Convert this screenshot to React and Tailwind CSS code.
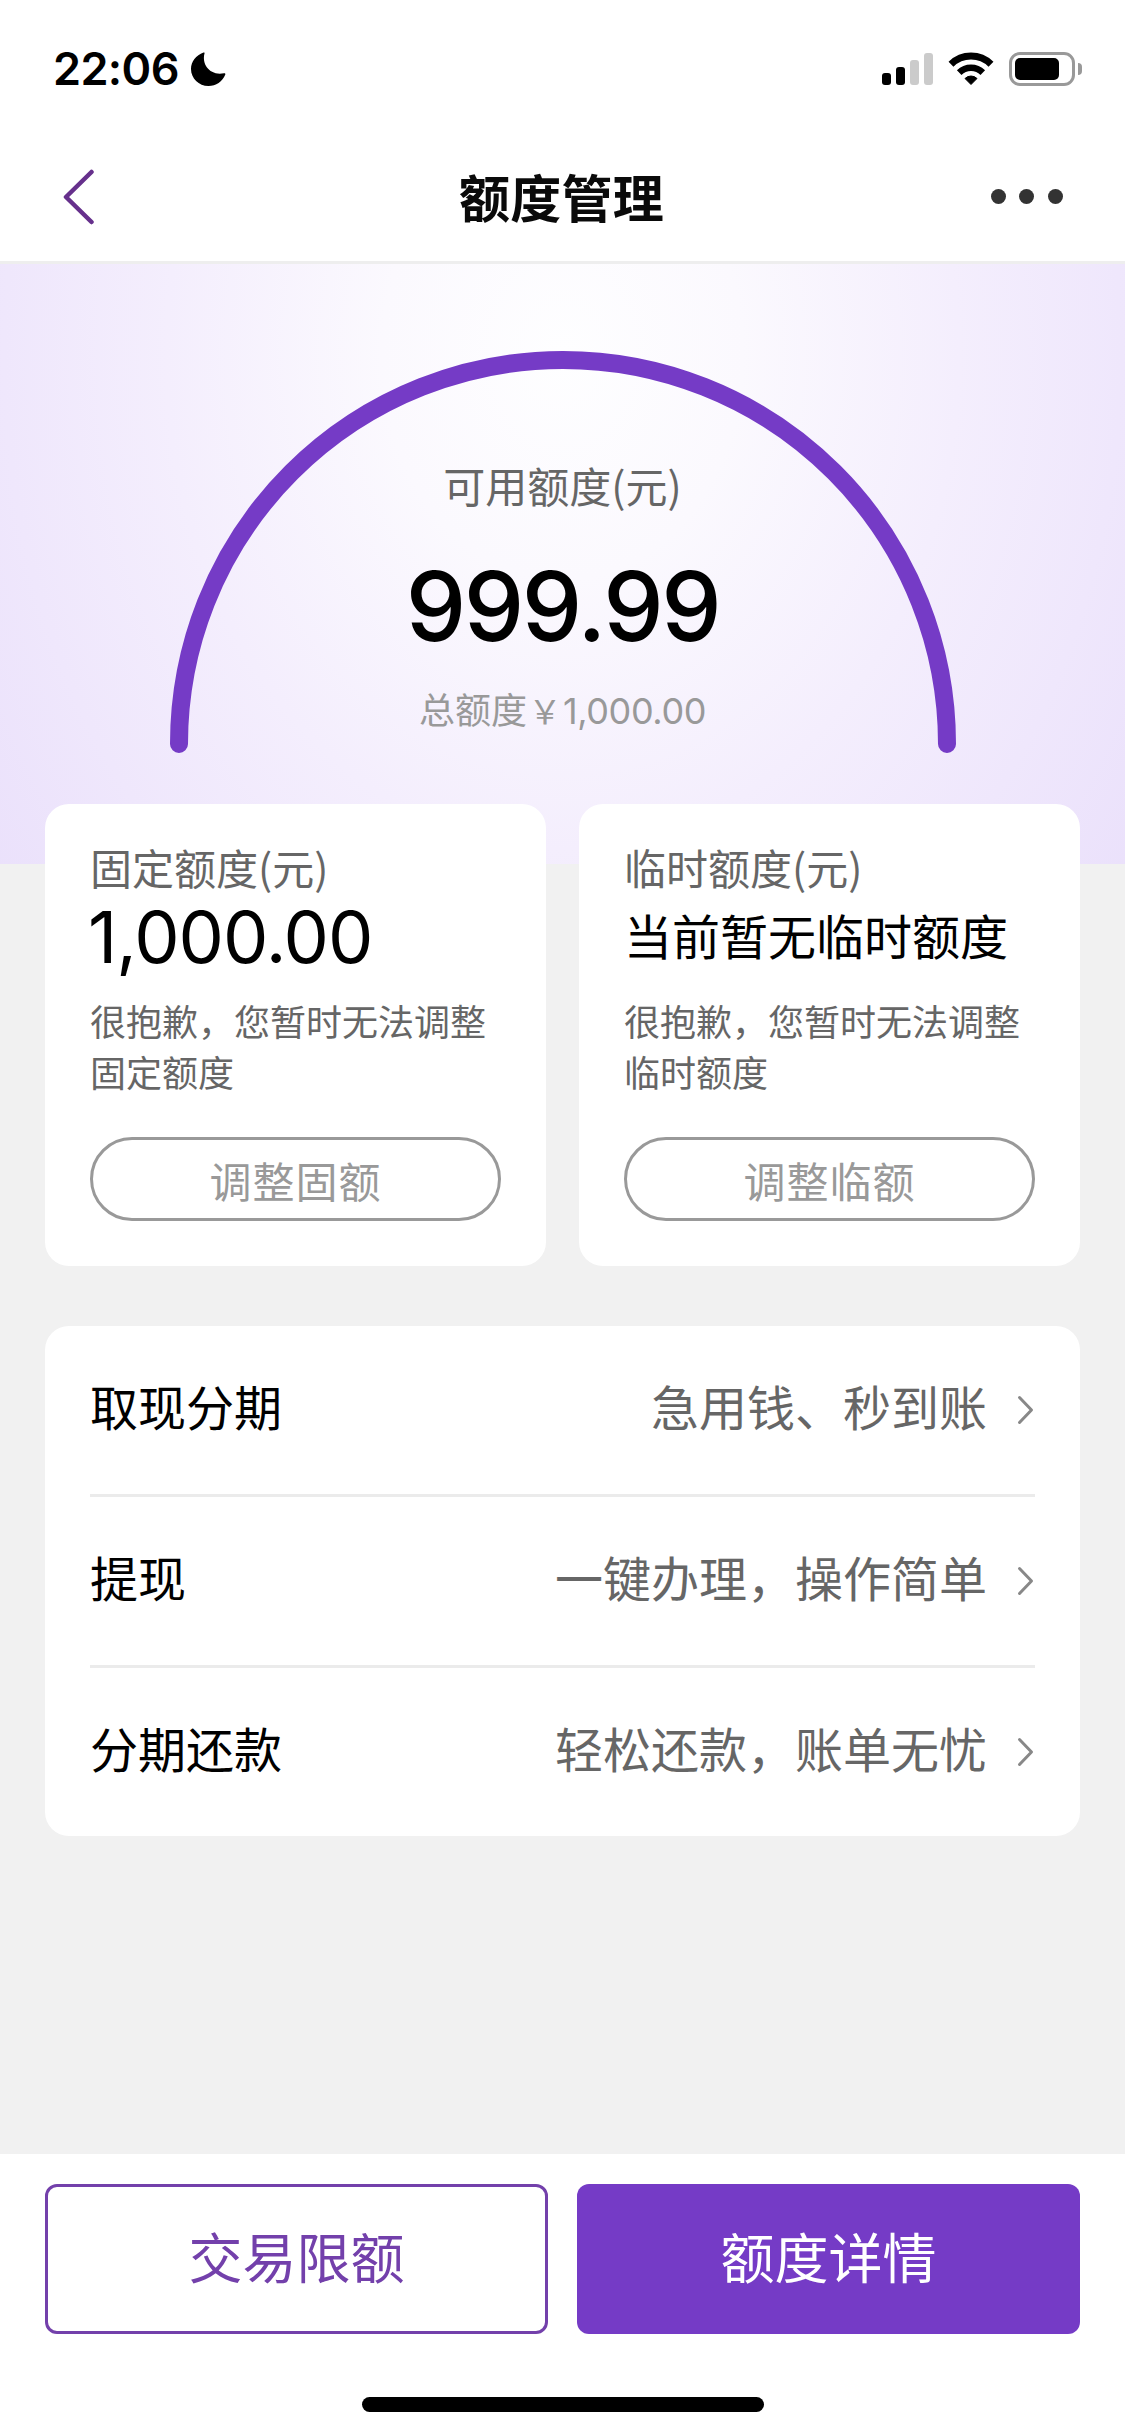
import { useState } from "react";

const quotaCards = [
  {
    id: "fixed",
    label: "固定额度(元)",
    amount: "1,000.00",
    lines: ["很抱歉，您暂时无法调整", "固定额度"],
    action: "调整固额",
  },
  {
    id: "temp",
    label: "临时额度(元)",
    notice: "当前暂无临时额度",
    lines: ["很抱歉，您暂时无法调整", "临时额度"],
    action: "调整临额",
  },
];

const services = [
  { title: "取现分期", desc: "急用钱、秒到账" },
  { title: "提现", desc: "一键办理，操作简单" },
  { title: "分期还款", desc: "轻松还款，账单无忧" },
];

function StatusBar() {
  return (
    <div className="flex h-[132px] items-start justify-between pl-[53px] pr-[43px] pt-[52px]">
      <div className="flex items-center gap-[12px]">
        <span className="font-['Inter'] text-[45px] font-semibold leading-[34px] tracking-[-0.6px]">
          22:06
        </span>
        <svg width="35" height="34" viewBox="0 0 35 34" fill="currentColor">
          <path d="M12.5 0.6C13.2 0.2 13.8 0.8 13.5 1.5C10.5 12.5 19 24 33 21.2C34 21 34.7 21.6 34.3 22.5C31.5 29.5 25 34 17.5 34C7.8 34 0 26.3 0 17C0 9.7 5 3.3 12.5 0.6Z" />
        </svg>
      </div>

      <div className="flex items-start">
        {/* Signal */}
        <div className="flex h-[33px] items-end gap-[5px]">
          <span className="h-3 w-[9px] rounded-[3px] bg-black" />
          <span className="h-[18px] w-[9px] rounded-[3px] bg-black" />
          <span className="h-[25px] w-[9px] rounded-[3px] bg-[#cbcbcb]" />
          <span className="h-8 w-[9px] rounded-[3px] bg-[#cbcbcb]" />
        </div>

        {/* Wifi */}
        <svg
          className="ml-[15px]"
          width="46"
          height="34"
          viewBox="0 0 46 34"
          fill="none"
          stroke="#000"
        >
          <path d="M3 12.2A28.5 28.5 0 0 1 43 12.2" strokeWidth="7" />
          <path d="M11.2 20.6A16.8 16.8 0 0 1 34.8 20.6" strokeWidth="6.5" />
          <path
            d="M23 32.5L17 26.5A8.5 8.5 0 0 1 29 26.5Z"
            fill="#000"
            strokeWidth="1"
            strokeLinejoin="round"
          />
        </svg>

        {/* Battery */}
        <div className="ml-[15px] flex items-center gap-[3px]">
          <div className="h-[34px] w-[66px] rounded-[11px] border-3 border-[#999] p-[3px]">
            <div className="h-[22px] w-[44px] rounded-[5px] bg-black" />
          </div>
          <span className="h-3 w-1 rounded-r-full bg-[#999]" />
        </div>
      </div>
    </div>
  );
}

function NavBar() {
  return (
    <header className="flex h-[132px] items-center justify-between border-b-3 border-[#eee] pl-[62px] pr-[62px]">
      <button className="w-[80px]" aria-label="返回">
        <svg
          width="32"
          height="56"
          viewBox="0 0 32 56"
          fill="none"
          stroke="#66308c"
          strokeWidth="4.5"
          strokeLinecap="round"
          strokeLinejoin="round"
        >
          <path d="M29.5 3L4 28L29.5 53" />
        </svg>
      </button>
      <h1 className="pr-[2px] text-[51px] font-bold leading-none tracking-[0.3px] text-[#0a0a0a]">
        额度管理
      </h1>
      <button
        className="flex w-[80px] justify-end gap-[13.5px]"
        aria-label="更多"
      >
        <span className="size-[15px] shrink-0 rounded-full bg-[#333]" />
        <span className="size-[15px] shrink-0 rounded-full bg-[#333]" />
        <span className="size-[15px] shrink-0 rounded-full bg-[#333]" />
      </button>
    </header>
  );
}

function QuotaGauge() {
  return (
    <section className="h-[600px] bg-[radial-gradient(ellipse_720px_900px_at_50%_15%,#fefeff_0%,#fbf9fe_25%,#f4eefd_55%,#eae0fb_100%)] pt-[87px]">
      <div className="relative mx-auto h-[402px] w-[786px]">
        <svg
          className="absolute inset-0"
          width="786"
          height="402"
          viewBox="0 0 786 402"
          fill="none"
        >
          <path
            d="M9 393A384 384 0 0 1 777 393"
            stroke="#753bc6"
            strokeWidth="18"
            strokeLinecap="round"
          />
        </svg>
        <div className="relative flex flex-col items-center pt-[104px]">
          <p className="text-[42px] leading-[60px] text-[#666]">可用额度(元)</p>
          <p className="mt-[41px] font-['Inter'] text-[96px] font-medium leading-[100px] tracking-[-2.4px]">
            999.99
          </p>
          <p className="mt-[26px] text-[36px] leading-[52px] text-[#999]">
            总额度
            <span className="inline-block w-[36px] text-center text-[33px] leading-none">
              ￥
            </span>
            <span className="font-['Inter'] tracking-[-0.4px]">1,000.00</span>
          </p>
        </div>
      </div>
    </section>
  );
}

function QuotaCard({ card }) {
  return (
    <div className="h-[462px] rounded-[24px] bg-white px-[45px] pt-[33px]">
      <p className="text-[42px] leading-[60px] text-[#666]">{card.label}</p>
      {card.amount ? (
        <p className="-ml-[2px] h-[85px] whitespace-nowrap pt-[2px] font-['Inter'] text-[72px] leading-[75px] tracking-[-1px]">
          {card.amount}
        </p>
      ) : (
        <p className="h-[85px] whitespace-nowrap text-[48px] leading-[75px]">
          {card.notice}
        </p>
      )}
      <div className="mt-[13px] text-[36px] leading-[51px] text-[#666]">
        {card.lines.map((line) => (
          <p key={line} className="whitespace-nowrap">
            {line}
          </p>
        ))}
      </div>
      <button className="mt-[40px] flex h-[84px] w-full items-center justify-center rounded-full border-3 border-[#999] text-[42px] tracking-[1px] text-[#999]">
        {card.action}
      </button>
    </div>
  );
}

function ServiceRow({ item }) {
  return (
    <li className="flex h-[171px] items-center justify-between border-b-3 border-[#ebebeb] text-[48px] leading-[72px] last:h-[168px] last:border-b-0">
      <span className="pb-[10px]">{item.title}</span>
      <span className="flex items-center text-[#666]">
        <span className="pb-[10px]">{item.desc}</span>
        <svg
          className="ml-[29px]"
          width="19"
          height="30"
          viewBox="0 0 19 30"
          fill="none"
          stroke="#888"
          strokeWidth="3"
          strokeLinecap="round"
          strokeLinejoin="round"
        >
          <path d="M3.5 2.5L15.5 15L3.5 27.5" />
        </svg>
      </span>
    </li>
  );
}

function App() {
  const [cards] = useState(quotaCards);

  return (
    <div
      lang="zh-CN"
      className="flex h-[2436px] w-[1125px] flex-col overflow-hidden bg-[#f1f1f1] font-['Noto_Sans_CJK_SC',sans-serif] text-black"
    >
      <div className="bg-white">
        <StatusBar />
        <NavBar />
      </div>

      <main className="flex-1">
        <QuotaGauge />

        <div className="relative -mt-[60px] grid grid-cols-2 gap-[33px] px-[45px]">
          {cards.map((card) => (
            <QuotaCard key={card.id} card={card} />
          ))}
        </div>

        <ul className="mx-[45px] mt-[60px] rounded-[24px] bg-white px-[45px]">
          {services.map((item) => (
            <ServiceRow key={item.title} item={item} />
          ))}
        </ul>
      </main>

      {/* Bottom actions */}
      <footer className="h-[282px] bg-white px-[45px] pt-[30px]">
        <div className="grid grid-cols-2 gap-[29px] text-[54px]">
          <button className="h-[150px] rounded-[12px] border-3 border-[#7340ab] pb-[8px] text-[#7340ab]">
            交易限额
          </button>
          <button className="h-[150px] rounded-[12px] bg-[#753bc6] pb-[8px] text-white">
            额度详情
          </button>
        </div>
        <div className="mx-auto mt-[63px] h-[15px] w-[402px] rounded-full bg-black" />
      </footer>
    </div>
  );
}

export default App;
